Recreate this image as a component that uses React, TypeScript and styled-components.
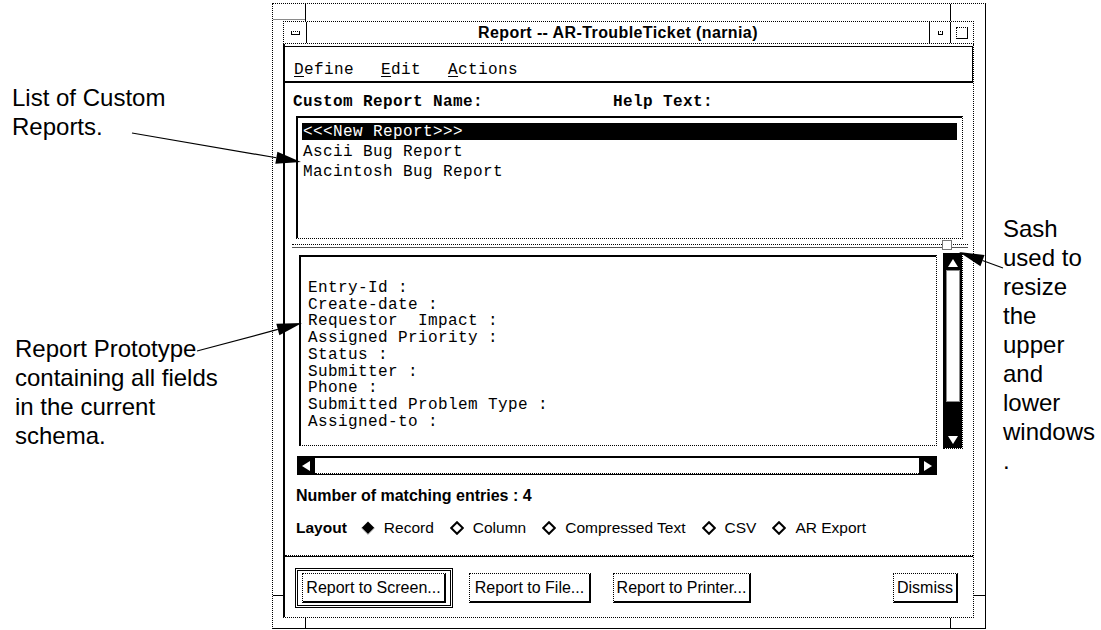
import React from "react";
import styled, { createGlobalStyle } from "styled-components";

const MONO = `"Liberation Mono", "DejaVu Sans Mono", monospace`;
const SANS = `"Liberation Sans", Arial, Helvetica, sans-serif`;
const STIPPLE = "1px dotted #000";

const GlobalStyle = createGlobalStyle`
  html, body {
    margin: 0;
    padding: 0;
    background: #fff;
  }
  body {
    width: 1101px;
    height: 630px;
    overflow: hidden;
  }
`;

const FIELDS = [
  "Entry-Id :",
  "Create-date :",
  "Requestor  Impact :",
  "Assigned Priority :",
  "Status :",
  "Submitter :",
  "Phone :",
  "Submitted Problem Type :",
  "Assigned-to :",
];

const REPORTS = ["<<<New Report>>>", "Ascii Bug Report", "Macintosh Bug Report"];

const LAYOUTS = ["Record", "Column", "Compressed Text", "CSV", "AR Export"];

// callout lines: [fromX, fromY, tipX, tipY]
const CALLOUTS = [
  [132, 133, 301, 162],
  [197, 351, 302, 323],
  [1003, 268, 959, 252],
];

function arrowHead(x1: number, y1: number, x2: number, y2: number, len = 25, half = 6) {
  const d = Math.hypot(x2 - x1, y2 - y1);
  const ux = (x2 - x1) / d;
  const uy = (y2 - y1) / d;
  const bx = x2 - ux * len;
  const by = y2 - uy * len;
  return {
    base: [bx, by],
    points: `${x2},${y2} ${bx - uy * half},${by + ux * half} ${bx + uy * half},${by - ux * half}`,
  };
}

const Arrow: React.FC<{ dir: "up" | "down" | "left" | "right" }> = ({ dir }) => {
  const pts = {
    up: "6,2 11,10 1,10",
    down: "1,2 11,2 6,10",
    left: "2,6 10,1 10,11",
    right: "2,1 10,6 2,11",
  }[dir];
  return (
    <svg width="12" height="12" viewBox="0 0 12 12">
      <polygon points={pts} fill="#fff" />
    </svg>
  );
};

const Diamond: React.FC<{ on?: boolean }> = ({ on }) => (
  <svg width="14" height="14" viewBox="0 0 14 14">
    {on ? (
      <>
        <polygon points="7,0.5 13.5,7 7,13.5 0.5,7" fill="#000" />
        <polyline points="0.9,7 7,13.1 13.1,7" fill="none" stroke="#888" strokeWidth="1" />
      </>
    ) : (
      <polygon points="7,1.2 12.8,7 7,12.8 1.2,7" fill="#fff" stroke="#000" strokeWidth="2" />
    )}
  </svg>
);

const App: React.FC = () => {
  return (
    <Page>
      <GlobalStyle />
      <NoteColumn $width={272} $pad="83px 0 0 0">
        <Note $top={0} $left={12}>{"List of Custom\nReports."}</Note>
        <Note $top={193} $left={15}>
          {"Report Prototype\ncontaining all fields\nin the current\nschema."}
        </Note>
      </NoteColumn>

      <Frame>
        <Notch $x={32} $y={0} $w={1} $h={17} />
        <Notch $x={0} $y={15} $w={32} $h={1} $dotted />
        <Notch $x={677} $y={0} $w={1} $h={17} />
        <Notch $x={0} $y={591} $w={10} $h={1} />
        <Notch $x={701} $y={591} $w={11} $h={1} />
        <Notch $x={32} $y={614} $w={1} $h={10} />
        <Notch $x={677} $y={614} $w={1} $h={10} />

        <TitleBar>
          <MenuButton>
            <MenuGlyph />
          </MenuButton>
          <Title>Report -- AR-TroubleTicket (narnia)</Title>
          <MinButton>
            <MinGlyph />
          </MinButton>
          <MaxButton>
            <MaxGlyph />
          </MaxButton>
        </TitleBar>

        <Client>
          <MenuBar>
            <MenuItem>
              <u>D</u>efine
            </MenuItem>
            <MenuItem>
              <u>E</u>dit
            </MenuItem>
            <MenuItem>
              <u>A</u>ctions
            </MenuItem>
          </MenuBar>

          <LabelRow>
            <span>Custom Report Name:</span>
            <span>Help Text:</span>
          </LabelRow>

          <ListBox>
            {REPORTS.map((r, i) => (
              <ListRow key={r} $selected={i === 0}>
                {r}
              </ListRow>
            ))}
          </ListBox>

          <Sash>
            <SashHandle />
          </Sash>

          <ScrolledWindow>
            <TextArea>{FIELDS.join("\n")}</TextArea>
            <VScroll>
              <ArrowButton $h={15}>
                <Arrow dir="up" />
              </ArrowButton>
              <VThumb />
              <Trough />
              <ArrowButton $h={15}>
                <Arrow dir="down" />
              </ArrowButton>
            </VScroll>
            <HScroll>
              <ArrowButton $w={18}>
                <Arrow dir="left" />
              </ArrowButton>
              <HThumb />
              <ArrowButton $w={18}>
                <Arrow dir="right" />
              </ArrowButton>
            </HScroll>
          </ScrolledWindow>

          <Count>Number of matching entries : 4</Count>

          <LayoutRow>
            <LayoutLabel>Layout</LayoutLabel>
            {LAYOUTS.map((l, i) => (
              <Option key={l}>
                <Diamond on={i === 0} />
                <span>{l}</span>
              </Option>
            ))}
          </LayoutRow>

          <Separator />

          <ButtonRow>
            <DefaultRing>
              <PushButton $w={144}>Report to Screen...</PushButton>
            </DefaultRing>
            <PushButton $w={122} $ml={16}>
              Report to File...
            </PushButton>
            <PushButton $w={138} $ml={22}>
              Report to Printer...
            </PushButton>
            <PushButton $w={65} $ml="auto">
              Dismiss
            </PushButton>
          </ButtonRow>
        </Client>
      </Frame>

      <NoteColumn $pad="214px 0 0 17px">
        <Note $top={0} $left={0}>
          {"Sash\nused to\nresize\nthe\nupper\nand\nlower\nwindows\n."}
        </Note>
      </NoteColumn>

      <Callouts width="1101" height="630" viewBox="0 0 1101 630">
        {CALLOUTS.map(([x1, y1, x2, y2], i) => {
          const head = arrowHead(x1, y1, x2, y2);
          return (
            <g key={i}>
              <line x1={x1} y1={y1} x2={head.base[0]} y2={head.base[1]} stroke="#000" strokeWidth="1.2" />
              <polygon points={head.points} fill="#000" />
            </g>
          );
        })}
      </Callouts>
    </Page>
  );
};

export default App;

const Page = styled.div`
  position: relative;
  display: flex;
  align-items: flex-start;
  width: 1101px;
  height: 630px;
  overflow: hidden;
  color: #000;
  font-family: ${SANS};
`;

const NoteColumn = styled.div<{ $width?: number; $pad: string }>`
  flex: ${(p) => (p.$width ? "none" : "1")};
  width: ${(p) => (p.$width ? `${p.$width}px` : "auto")};
  box-sizing: border-box;
  padding: ${(p) => p.$pad};
`;

const Note = styled.p<{ $top: number; $left: number }>`
  margin: ${(p) => p.$top}px 0 0 ${(p) => p.$left}px;
  font-family: ${SANS};
  font-size: 24px;
  line-height: 29px;
  white-space: pre-line;
`;

const Callouts = styled.svg`
  position: absolute;
  left: 0;
  top: 0;
  pointer-events: none;
`;

const Frame = styled.div`
  position: relative;
  flex: none;
  box-sizing: border-box;
  width: 714px;
  height: 626px;
  margin-top: 3px;
  padding: 17px 11px 10px 10px;
  border-left: ${STIPPLE};
  border-top: ${STIPPLE};
  border-right: 1px solid #000;
  border-bottom: 1px solid #000;
`;

const Notch = styled.span<{ $x: number; $y: number; $w: number; $h: number; $dotted?: boolean }>`
  position: absolute;
  left: ${(p) => p.$x}px;
  top: ${(p) => p.$y}px;
  width: ${(p) => p.$w}px;
  height: ${(p) => p.$h}px;
  background: ${(p) => (p.$dotted ? "#8a8a8a" : "#000")};
`;

const TitleBar = styled.div`
  display: flex;
  box-sizing: border-box;
  height: 23px;
  border: ${STIPPLE};
  font-family: ${SANS};
  font-weight: bold;
  font-size: 16px;
  letter-spacing: 0.4px;
`;

const MenuButton = styled.div`
  display: flex;
  align-items: center;
  justify-content: center;
  width: 22px;
  border-right: 1px solid #000;
`;

const MenuGlyph = styled.span`
  display: block;
  width: 9px;
  height: 4px;
  box-sizing: border-box;
  border: 1px solid #000;
  border-top: ${STIPPLE};
`;

const Title = styled.div`
  flex: 1;
  display: flex;
  align-items: center;
  justify-content: center;
  line-height: 20px;
`;

const MinButton = styled.div`
  display: flex;
  align-items: center;
  justify-content: center;
  width: 20px;
  border-left: 1px solid #000;
`;

const MinGlyph = styled.span`
  display: block;
  width: 5px;
  height: 4px;
  box-sizing: border-box;
  border: 1px solid #000;
  border-top: ${STIPPLE};
`;

const MaxButton = styled.div`
  display: flex;
  align-items: center;
  justify-content: center;
  width: 22px;
  border-left: 1px solid #000;
`;

const MaxGlyph = styled.span`
  display: block;
  width: 12px;
  height: 12px;
  box-sizing: border-box;
  border: 1px solid #000;
  border-top: ${STIPPLE};
  border-left: ${STIPPLE};
`;

const Client = styled.div`
  display: flex;
  flex-direction: column;
  box-sizing: border-box;
  height: 574px;
  border-left: 2px solid #000;
  border-right: ${STIPPLE};
  border-bottom: ${STIPPLE};
  overflow: hidden;
`;

const MenuBar = styled.div`
  display: flex;
  gap: 27px;
  box-sizing: border-box;
  height: 37px;
  margin-top: 2px;
  padding: 15px 0 0 9px;
  border-top: 1px solid #000;
  border-bottom: 2px solid #000;
  border-right: 1px solid #000;
  font-family: ${MONO};
  font-size: 16px;
  letter-spacing: 0.4px;
  line-height: 17px;
`;

const MenuItem = styled.span`
  u {
    text-decoration-thickness: 1px;
    text-underline-offset: 2px;
  }
`;

const LabelRow = styled.div`
  display: grid;
  grid-template-columns: 320px auto;
  padding: 11px 0 0 8px;
  font-family: ${MONO};
  font-size: 16px;
  font-weight: bold;
  letter-spacing: 0.4px;
  line-height: 17px;
`;

const ListBox = styled.div`
  flex: none;
  box-sizing: border-box;
  height: 123px;
  margin: 5px 10px 0 11px;
  padding: 5px 5px 0 4px;
  border-top: 2px solid #000;
  border-left: 2px solid #000;
  border-right: ${STIPPLE};
  border-bottom: ${STIPPLE};
  font-family: ${MONO};
  font-size: 16px;
  letter-spacing: 0.4px;
`;

const ListRow = styled.div<{ $selected?: boolean }>`
  height: 17px;
  margin-bottom: 3px;
  padding-left: 1px;
  line-height: 18px;
  white-space: pre;
  background: ${(p) => (p.$selected ? "#000" : "transparent")};
  color: ${(p) => (p.$selected ? "#fff" : "#000")};
`;

const Sash = styled.div`
  position: relative;
  flex: none;
  box-sizing: border-box;
  height: 4px;
  margin: 5px 5px 0 7px;
  border-top: ${STIPPLE};
  border-bottom: 1px solid #555;
`;

const SashHandle = styled.span`
  position: absolute;
  left: 650px;
  top: -5px;
  width: 10px;
  height: 10px;
  box-sizing: border-box;
  background: #fff;
  border: 1px solid #777;
`;

const ScrolledWindow = styled.div`
  display: grid;
  grid-template-columns: 640px 20px;
  grid-template-rows: 196px 19px;
  column-gap: 6px;
  row-gap: 7px;
  margin: 5px 0 0 12px;
`;

const TextArea = styled.div`
  box-sizing: border-box;
  width: 638px;
  height: 191px;
  margin: 2px 0 0 2px;
  padding: 23px 0 0 7px;
  border-top: 2px solid #000;
  border-left: 2px solid #000;
  border-right: ${STIPPLE};
  border-bottom: ${STIPPLE};
  font-family: ${MONO};
  font-size: 16px;
  letter-spacing: 0.4px;
  line-height: 16.7px;
  white-space: pre;
`;

const VScroll = styled.div`
  display: flex;
  flex-direction: column;
  box-sizing: border-box;
  padding: 2px 2px 1px 3px;
  background: #000;
  background-clip: padding-box;
  border-right: ${STIPPLE};
  border-bottom: ${STIPPLE};
`;

const ArrowButton = styled.div<{ $w?: number; $h?: number }>`
  flex: none;
  display: flex;
  align-items: center;
  justify-content: center;
  width: ${(p) => (p.$w ? `${p.$w}px` : "auto")};
  height: ${(p) => (p.$h ? `${p.$h}px` : "auto")};
  background: #000;
`;

const VThumb = styled.div`
  flex: none;
  height: 132px;
  box-sizing: border-box;
  background: #fff;
  border: 1px solid #8a8a8a;
`;

const Trough = styled.div`
  flex: 1;
  background: #000;
`;

const HScroll = styled.div`
  display: flex;
  box-sizing: border-box;
  border-top: 2px solid #000;
  border-bottom: ${STIPPLE};
  background: #000;
`;

const HThumb = styled.div`
  flex: 1;
  background: #fff;
  border-bottom: ${STIPPLE};
`;

const Count = styled.div`
  margin: 11px 0 0 11px;
  font-family: ${SANS};
  font-size: 16px;
  font-weight: bold;
  line-height: 19px;
`;

const LayoutRow = styled.div`
  display: flex;
  align-items: center;
  gap: 16px;
  height: 18px;
  margin: 14px 0 0 11px;
  font-family: ${SANS};
  font-size: 15.5px;
  line-height: 18px;
`;

const LayoutLabel = styled.span`
  font-weight: bold;
  margin-right: -2px;
`;

const Option = styled.span`
  display: flex;
  align-items: center;
  gap: 9px;
`;

const Separator = styled.div`
  flex: none;
  box-sizing: border-box;
  height: 2px;
  margin-top: 18px;
  border-top: ${STIPPLE};
  border-bottom: 1px solid #000;
`;

const ButtonRow = styled.div`
  display: flex;
  align-items: center;
  padding: 11px 15px 9px 10px;
`;

const DefaultRing = styled.div`
  flex: none;
  box-sizing: border-box;
  height: 40px;
  padding: 2px 4px;
  border: 3px double #000;
`;

const PushButton = styled.button<{ $w: number; $ml?: number | "auto" }>`
  flex: none;
  box-sizing: border-box;
  width: ${(p) => p.$w}px;
  height: 30px;
  margin: 0 0 0 ${(p) => (p.$ml === undefined ? "0" : p.$ml === "auto" ? "auto" : `${p.$ml}px`)};
  padding: 0;
  background: #fff;
  color: #000;
  border-left: ${STIPPLE};
  border-top: ${STIPPLE};
  border-right: 2px solid #000;
  border-bottom: 2px solid #000;
  border-radius: 0;
  font-family: ${SANS};
  font-size: 16px;
  white-space: nowrap;
`;
